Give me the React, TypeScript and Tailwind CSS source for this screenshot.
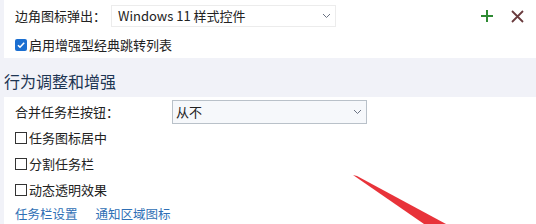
const font = { fontFamily: '"Noto Sans CJK SC", "Noto Sans", sans-serif' };

function Chevron() {
  return (
    <svg width="9" height="6" viewBox="0 0 9 6" className="text-gray-500">
      <path d="M1 1l3.5 3.5L8 1" fill="none" stroke="currentColor" strokeWidth="1" />
    </svg>
  );
}

function Box({ checked }: { checked?: boolean }) {
  if (checked)
    return (
      <span className="flex h-[12px] w-[12px] items-center justify-center rounded-[2px] bg-[#1b6fd1]">
        <svg width="10" height="10" viewBox="0 0 10 10">
          <path d="M2 5.2l2 2L8.2 2.8" fill="none" stroke="white" strokeWidth="1.6" />
        </svg>
      </span>
    );
  return <span className="h-[12px] w-[12px] border border-[#333] bg-white" />;
}

function Check({ label, checked }: { label: string; checked?: boolean }) {
  return (
    <div className="flex h-[26px] items-center gap-[2px] text-[13px] text-[#222]">
      <Box checked={checked} />
      <span>{label}</span>
    </div>
  );
}

export default function App() {
  return (
    <div className="h-[224px] w-[536px] overflow-hidden bg-[#f1f2f8] pl-[4px]" style={font}>
      <div className="h-[58px] bg-white pl-[11px] pr-[12px]">
        <div className="flex h-[32px] items-center">
          <span className="w-[96px] text-[13px] text-[#222]">边角图标弹出：</span>
          <div className="flex h-[22px] w-[225px] items-center justify-between border border-[#ececec] pl-[6px] pr-[4px] text-[13px] text-[#222]">
            <span>Windows 11 样式控件</span>
            <Chevron />
          </div>
          <div className="ml-auto flex items-center gap-[17px]">
            <svg width="14" height="14" viewBox="0 0 14 14">
              <path d="M7 1v12M1 7h12" stroke="#2e8a33" strokeWidth="2" />
            </svg>
            <svg width="13" height="13" viewBox="0 0 13 13">
              <path d="M1 1l11 11M12 1L1 12" stroke="#6a3b3e" strokeWidth="1.8" />
            </svg>
          </div>
        </div>
        <Check label="启用增强型经典跳转列表" checked />
      </div>
      <div className="flex h-[39px] items-center pt-[6px] text-[16px] text-[#1d3553]">行为调整和增强</div>
      <div className="h-[127px] bg-white pl-[11px] pt-[2px]">
        <div className="flex h-[26px] items-center">
          <span className="w-[157px] text-[13px] text-[#222]">合并任务栏按钮：</span>
          <div className="flex h-[24px] w-[195px] items-center justify-between border border-[#b9c1c9] bg-[#f6f8fb] pl-[3px] pr-[4px] text-[13px] text-[#222]">
            <span>从不</span>
            <Chevron />
          </div>
        </div>
        <Check label="任务图标居中" />
        <Check label="分割任务栏" />
        <Check label="动态透明效果" />
        <div className="flex h-[23px] items-center gap-[18px] text-[12.5px] text-[#2f6fb5]">
          <span>任务栏设置</span>
          <span>通知区域图标</span>
        </div>
      </div>
      <svg className="absolute left-0 top-0" width="536" height="224" viewBox="0 0 536 224">
        <polygon points="353,175 357,176 446,224 424,224" fill="#e8333a" />
      </svg>
    </div>
  );
}
